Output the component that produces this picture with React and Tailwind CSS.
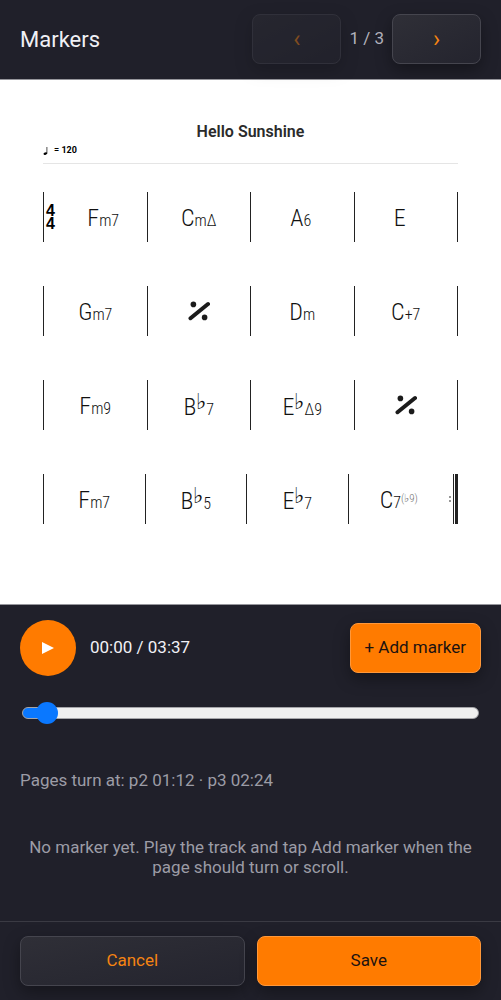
import React, { useState } from "react";

const CHORD_FONT = "font-['Roboto_Condensed',Roboto,sans-serif]";

const ROWS = [
  [{ root: "F", rest: "m7" }, { root: "C", rest: "m∆" }, { root: "A", rest: "6" }, { root: "E" }],
  [{ root: "G", rest: "m7" }, { repeat: true }, { root: "D", rest: "m" }, { root: "C", rest: "+7" }],
  [{ root: "F", rest: "m9" }, { root: "B", flat: true, rest: "7" }, { root: "E", flat: true, rest: "∆9" }, { repeat: true }],
  [{ root: "F", rest: "m7" }, { root: "B", flat: true, rest: "5" }, { root: "E", flat: true, rest: "7" }, { root: "C", rest: "7", ext: "(♭9)" }],
];

function Simile() {
  return (
    <svg viewBox="0 0 22 20" className="w-[22px] h-5" aria-label="Repeat bar">
      <path d="M2.5 17.2 20 3" stroke="#1b1b1b" strokeWidth="4" strokeLinecap="round" />
      <circle cx="5.4" cy="3.4" r="2.8" fill="#1b1b1b" />
      <circle cx="16.6" cy="16.4" r="2.8" fill="#1b1b1b" />
    </svg>
  );
}

function Chord({ chord }) {
  if (chord.repeat) return <Simile />;
  return (
    <span className={`min-w-6 pt-1 whitespace-nowrap text-base leading-6 font-light text-[#111] ${CHORD_FONT}`}>
      <span className="text-2xl leading-6">{chord.root}</span>
      {chord.flat && <span className="align-super text-[22px] leading-none">♭</span>}
      {chord.rest}
      {chord.ext && <sup className="text-[11px] text-neutral-500">{chord.ext}</sup>}
    </span>
  );
}

function Score() {
  return (
    <main className="bg-white px-[43px] pt-[42px] pb-20 text-[#2b2b2b]">
      <h2 className="text-center text-base leading-5 font-semibold">Hello Sunshine</h2>
      <div className="flex items-center gap-1.5 h-[22px] pb-1 border-b border-neutral-200 text-[9px] font-bold text-black">
        <svg viewBox="0 0 5 8" className="w-[5px] h-2" aria-hidden="true">
          <path d="M3.9 0v6.4" stroke="#000" strokeWidth=".7" />
          <ellipse cx="2.4" cy="6.6" rx="1.9" ry="1.2" transform="rotate(-20 2.4 6.6)" />
        </svg>
        = 120
      </div>
      <div className="flex flex-col gap-11 pt-7">
        {ROWS.map((row, i) => {
          const last = i === ROWS.length - 1;
          return (
            <div
              key={i}
              className={`flex h-[50px] border-[#222] ${last ? "" : "border-r"}`}
            >
              {row.map((chord, j) => (
                <div key={j} className="flex flex-1 items-center border-l border-[#222]">
                  {i === 0 && j === 0 && (
                    <div className="w-4 pl-0.5 text-base leading-[13px] font-bold text-black font-['Liberation_Sans',sans-serif]">
                      4<br />4
                    </div>
                  )}
                  <div className="flex flex-1 justify-center">
                    <Chord chord={chord} />
                  </div>
                </div>
              ))}
              {last && (
                <div className="flex items-center gap-0.5">
                  <span className="flex flex-col gap-0.5">
                    <i className="size-0.5 rounded-full bg-neutral-500" />
                    <i className="size-0.5 rounded-full bg-neutral-500" />
                  </span>
                  <span className="w-[5px] h-full border-l border-r-3 border-[#222]" />
                </div>
              )}
            </div>
          );
        })}
      </div>
    </main>
  );
}

const BTN = "h-[50px] rounded-lg border shadow-[0_6px_16px_rgba(0,0,0,0.35)]";
const DARK = "border-[#45454e] bg-linear-to-br from-[#2f2f37] to-[#24242e] text-[#f58412]";
const ORANGE = "border-[#ff983a] bg-[#ff7b00] text-[#1c1210]";

function App() {
  const [page, setPage] = useState(1);
  const [position, setPosition] = useState(3);

  return (
    <div className="flex flex-col min-h-screen bg-[#20202a] text-[17px] text-[#f0f0f5] font-[Roboto,sans-serif]">
      <header className="flex items-center justify-between px-5 pt-3.5 pb-[15px] border-b border-[#96969c]">
        <h1 className="text-[22px]">Markers</h1>
        <div className="flex items-center gap-2">
          <button
            aria-label="Previous page"
            disabled={page === 1}
            onClick={() => setPage(page - 1)}
            className={`w-[89px] text-2xl leading-6 disabled:opacity-45 ${BTN} ${DARK}`}
          >
            ‹
          </button>
          <span className="text-[#b4b4be]">{page} / 3</span>
          <button
            aria-label="Next page"
            disabled={page === 3}
            onClick={() => setPage(page + 1)}
            className={`w-[89px] text-2xl leading-6 disabled:opacity-45 ${BTN} ${DARK}`}
          >
            ›
          </button>
        </div>
      </header>

      <Score />

      <section className="flex flex-col px-5 pt-[15px] border-t border-[#96969c]">
        <div className="flex items-center gap-3.5">
          <button aria-label="Play" className="flex items-center justify-center size-14 rounded-full bg-[#ff7b00]">
            <svg viewBox="0 0 12 12" className="size-3" fill="#fff">
              <path d="M0 0 12 6 0 12z" />
            </svg>
          </button>
          <span>00:00 / 03:37</span>
          <button className={`ml-auto px-3.5 ${BTN} ${ORANGE}`}>+ Add marker</button>
        </div>

        <input
          type="range"
          aria-label="Track position"
          min="0"
          max="100"
          value={position}
          onChange={(e) => setPosition(Number(e.target.value))}
          style={{
            "--fill": `calc(11px + (100% - 22px) * ${position / 100})`,
          }}
          className="appearance-none mx-0.5 mt-[26px] h-[22px] bg-transparent [&::-webkit-slider-runnable-track]:h-3 [&::-webkit-slider-runnable-track]:rounded-full [&::-webkit-slider-runnable-track]:border [&::-webkit-slider-runnable-track]:border-[#a5a5a9] [&::-webkit-slider-runnable-track]:bg-[linear-gradient(90deg,#0a78ff_var(--fill),#efefef_var(--fill))] [&::-webkit-slider-thumb]:appearance-none [&::-webkit-slider-thumb]:-mt-1.5 [&::-webkit-slider-thumb]:size-[22px] [&::-webkit-slider-thumb]:rounded-full [&::-webkit-slider-thumb]:bg-[#0a78ff]"
        />

        <p className="mt-[46px] leading-5 text-[#9c9ca6]">Pages turn at: p2 01:12 · p3 02:24</p>
        <p className="px-1 pt-[47px] pb-11 text-center leading-5 text-[#9c9ca6]">
          No marker yet. Play the track and tap Add marker when the page should turn or scroll.
        </p>
      </section>

      <footer className="flex gap-3 mt-auto px-5 py-3.5 border-t border-[#3a3a43]">
        <button className={`flex-1 ${BTN} ${DARK}`}>Cancel</button>
        <button className={`flex-1 ${BTN} ${ORANGE}`}>Save</button>
      </footer>
    </div>
  );
}

export default App;
